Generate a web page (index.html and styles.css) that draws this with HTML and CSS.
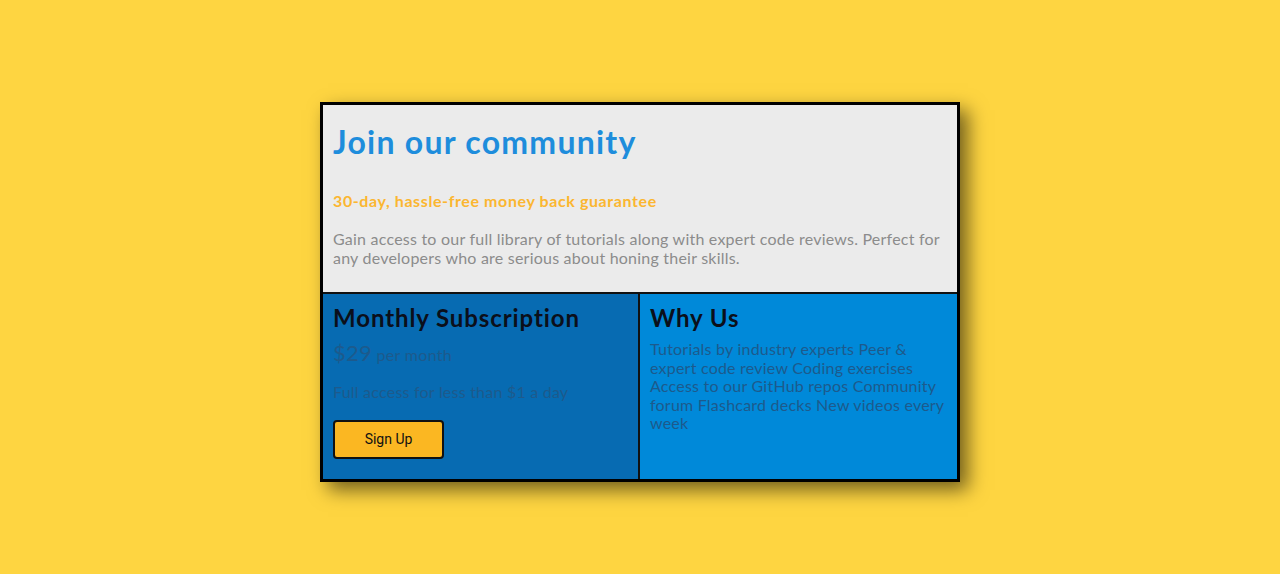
FILE: index.html
```html
<!DOCTYPE html>
<html lang="en">
<head>
<meta charset="utf-8">
<title>Join our community</title>
<link rel="stylesheet" href="styles.css">
</head>
<body>
<main class="page">
  <section class="card">
    <div class="intro">
      <h1 class="title">Join our community</h1>
      <h2 class="guarantee">30-day, hassle-free money back guarantee</h2>
      <p class="desc">Gain access to our full library of tutorials along with expert code reviews. Perfect for any developers who are serious about honing their skills.</p>
    </div>
    <div class="bottom">
      <div class="col col-sub">
        <h2 class="col-title">Monthly Subscription</h2>
        <p class="price"><span class="amount">$29</span> <span class="per">per month</span></p>
        <p class="col-text">Full access for less than $1 a day</p>
        <button class="btn">Sign Up</button>
      </div>
      <div class="col col-why">
        <h2 class="col-title">Why Us</h2>
        <p class="col-text">Tutorials by industry experts Peer &amp; expert code review Coding exercises Access to our GitHub repos Community forum Flashcard decks New videos every week</p>
      </div>
    </div>
  </section>
</main>
</body>
</html>
```
FILE: styles.css
```css
* { box-sizing: border-box; }
html, body { margin: 0; padding: 0; }
body {
  background: #fed541;
  font-family: Lato, "Liberation Sans", sans-serif;
  height: 574px;
}
.page {
  display: flex;
  justify-content: center;
  padding-top: 102px;
}
.card {
  width: 640px;
  border: 3px solid #000;
  box-shadow: 8px 8px 18px rgba(0,0,0,0.55);
  background: #ebebeb;
}
.intro {
  padding: 10px 10px 25px;
  border-bottom: 2px solid #111;
}
.title {
  margin: 7px 0 0;
  font-size: 32px;
  font-weight: 700;
  letter-spacing: 1.25px;
  color: #1e8ddc;
  line-height: 40px;
}
.guarantee {
  margin: 29px 0 0;
  font-size: 16px;
  font-weight: 700;
  letter-spacing: 0.6px;
  color: #fbb630;
  line-height: 20px;
}
.desc {
  margin: 19px 0 0;
  font-size: 16px;
  letter-spacing: 0.22px;
  color: #8c8c8c;
  line-height: 18.5px;
}
.bottom {
  display: grid;
  grid-template-columns: 1fr 1fr;
  height: 185px;
}
.col {
  padding: 9px 10px;
}
.col-sub {
  background: #076bb2;
  border-right: 2px solid #111;
}
.col-why {
  background: #0089d9;
}
.col-title {
  margin: 0;
  font-size: 24px;
  font-weight: 700;
  letter-spacing: 0.9px;
  color: #0b0f1a;
  line-height: 30px;
}
.price {
  margin: 8px 0 0;
  color: #1d5a8c;
  line-height: 24px;
  letter-spacing: 0.3px;
}
.amount { font-size: 22px; }
.per { font-size: 16px; }
.col-text {
  margin: 0;
  font-size: 16px;
  letter-spacing: 0.22px;
  color: #1d5a8c;
  line-height: 18.5px;
}
.col-sub .col-text { margin-top: 16px; }
.col-why .col-text { margin-top: 7px; }
.btn {
  margin-top: 18px;
  width: 111px;
  height: 39px;
  background: #fbb722;
  border: 2px solid #111;
  border-radius: 4px;
  font-family: Roboto, "Liberation Sans", sans-serif;
  font-size: 14px;
  color: #111;
}
```
